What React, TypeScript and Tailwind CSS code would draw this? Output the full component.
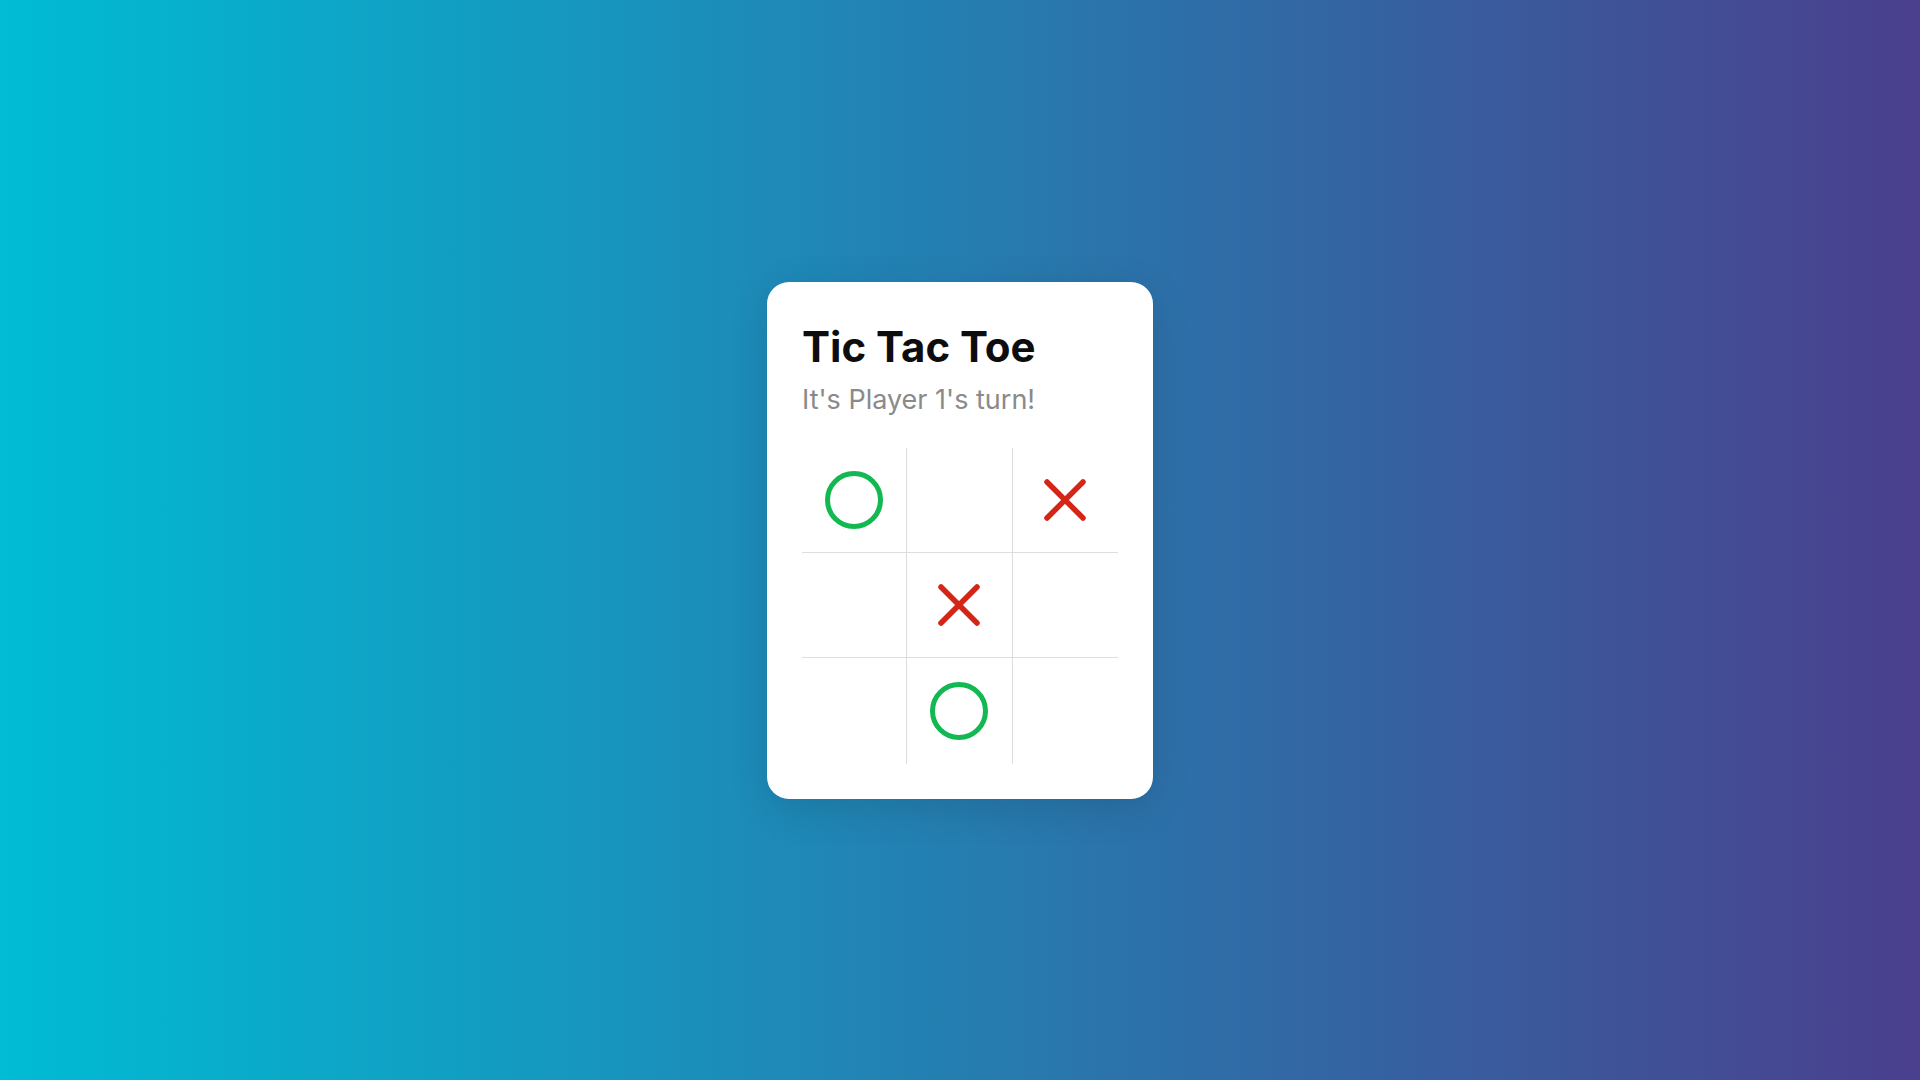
const board: ('X' | 'O' | null)[] = ['O', null, 'X', null, 'X', null, null, 'O', null];

function Mark({ value }: { value: 'X' | 'O' | null }) {
  if (value === 'O') {
    return (
      <svg width="58" height="58" viewBox="0 0 58 58">
        <circle cx="29" cy="29" r="26.5" fill="none" stroke="#12b851" strokeWidth="5" />
      </svg>
    );
  }
  if (value === 'X') {
    return (
      <svg width="44" height="44" viewBox="0 0 44 44">
        <path d="M4 4 L40 40 M40 4 L4 40" stroke="#d42616" strokeWidth="5.5" strokeLinecap="round" />
      </svg>
    );
  }
  return null;
}

export default function App() {
  return (
    <div className="w-full h-screen flex items-center justify-center bg-[linear-gradient(to_right,#00bcd4,#4a3f8d)]">
      <div className="bg-white rounded-[22px] p-[35px] shadow-[0_10px_40px_rgba(0,0,0,0.12)]" style={{ fontFamily: 'Inter, "Open Sans", sans-serif' }}>
        <h1 className="text-[42px] leading-[60px] font-bold text-[#0d0d0d]">Tic Tac Toe</h1>
        <p className="text-[27px] leading-[40px] text-[#8a8a8a] mt-[3px]">It's Player 1's turn!</p>
        <div className="grid grid-cols-3 grid-rows-3 w-[316px] h-[316px] mt-[28px]">
          {board.map((cell, i) => {
            const col = i % 3;
            const row = Math.floor(i / 3);
            return (
              <div
                key={i}
                className={
                  'flex items-center justify-center border-[#dedede] ' +
                  (col < 2 ? 'border-r ' : '') +
                  (row < 2 ? 'border-b' : '')
                }
              >
                <Mark value={cell} />
              </div>
            );
          })}
        </div>
      </div>
    </div>
  );
}
